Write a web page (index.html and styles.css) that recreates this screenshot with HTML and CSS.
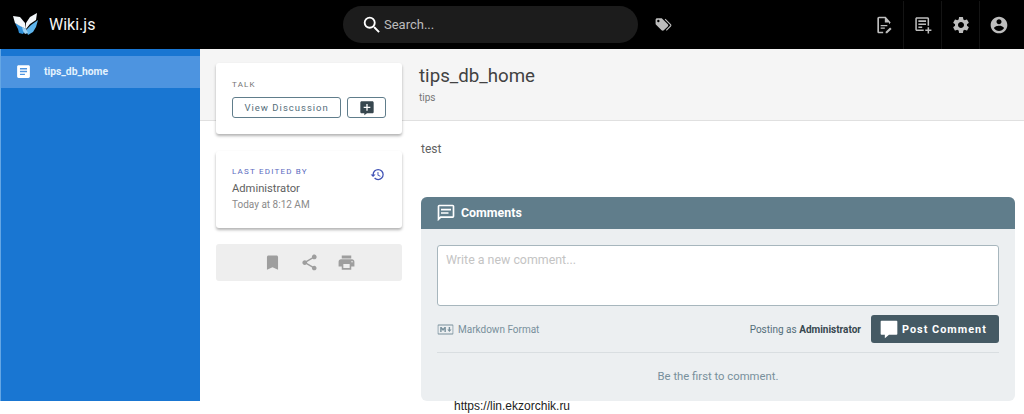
FILE: index.html
```html
<!DOCTYPE html>
<html lang="en">
<head>
    <meta charset="UTF-8">
    <title>tips_db_home | Wiki.js</title>
    <link rel="stylesheet" href="styles.css">
</head>
<body>
    <header class="topbar">
        <div class="brand">
            <svg class="logo" viewBox="0 0 26 24" width="26" height="24">
                <path fill="#2f8fd8" d="M2 10l6 3 5 3-3 5-4-1-1-4z"/>
                <path fill="#5db4ec" d="M25 7l-2 7-3 5-5 3-2-5 5-5z"/>
                <path fill="#f4f8fb" d="M0 3l7 1 5 6 1 6-6-3-5-3z"/>
                <path fill="#f4f8fb" d="M24 0l-1 7-6 4-4 5 0-6 4-6z"/>
                <path fill="#9fd2f4" d="M9 14l4 2 2 4-3 1-2-3z"/>
            </svg>
            <span class="brand-name">Wiki.js</span>
        </div>
        <div class="search-wrap">
            <div class="search">
                <svg class="icon search-icon" viewBox="0 0 24 24"><path d="M15.5 14h-.79l-.28-.27A6.47 6.47 0 0 0 16 9.5 6.5 6.5 0 1 0 9.5 16c1.61 0 3.09-.59 4.23-1.57l.27.28v.79l5 4.99L20.49 19l-4.99-5zm-6 0C7.01 14 5 11.99 5 9.5S7.01 5 9.5 5 14 7.01 14 9.5 11.99 14 9.5 14z"/></svg>
                <span>Search...</span>
            </div>
            <svg class="icon tag-icon" viewBox="0 0 24 24"><path d="M5.5,9A1.5,1.5 0 0,0 7,7.5A1.5,1.5 0 0,0 5.5,6A1.5,1.5 0 0,0 4,7.5A1.5,1.5 0 0,0 5.5,9M17.41,11.58C17.77,11.94 18,12.44 18,13C18,13.55 17.78,14.05 17.41,14.41L12.41,19.41C12.05,19.77 11.55,20 11,20C10.45,20 9.95,19.78 9.58,19.41L2.59,12.42C2.22,12.05 2,11.55 2,11V6C2,4.89 2.89,4 4,4H9C9.55,4 10.05,4.22 10.41,4.58L17.41,11.58M13.54,5.71L14.54,4.71L21.41,11.58C21.78,11.94 22,12.45 22,13C22,13.55 21.78,14.05 21.42,14.41L16.04,19.79L15.04,18.79L20.75,13L13.54,5.71Z"/></svg>
        </div>
        <nav class="actions">
            <div class="action">
                <svg class="icon" viewBox="0 0 24 24"><path d="M14 2H6c-1.1 0-2 .9-2 2v16c0 1.1.9 2 2 2h5v-2H6V4h7v5h5v2l2-2-6-7zM8 12h8v1.5H8zm0 3h5v1.5H8zm6 5.2V22h1.8l5.3-5.3-1.8-1.8z"/></svg>
            </div>
            <div class="action">
                <svg class="icon" viewBox="0 0 24 24"><path d="M19 3H5c-1.1 0-2 .9-2 2v14c0 1.1.9 2 2 2h9v-2H5V5h14v9h2V5c0-1.1-.9-2-2-2zM7 7h10v2H7zm0 4h10v2H7zm0 4h5v2H7zm12 1v3h-3v2h3v3h2v-3h3v-2h-3v-3z" transform="scale(.92)"/></svg>
            </div>
            <div class="action">
                <svg class="icon" viewBox="0 0 24 24"><path d="M19.14 12.94c.04-.3.06-.61.06-.94 0-.32-.02-.64-.07-.94l2.03-1.58a.49.49 0 0 0 .12-.61l-1.92-3.32a.488.488 0 0 0-.59-.22l-2.39.96c-.5-.38-1.03-.7-1.62-.94l-.36-2.54a.484.484 0 0 0-.48-.41h-3.84c-.24 0-.43.17-.47.41l-.36 2.54c-.59.24-1.13.57-1.62.94l-2.39-.96c-.22-.08-.47 0-.59.22L2.74 8.87c-.12.21-.08.47.12.61l2.03 1.58c-.05.3-.09.63-.09.94s.02.64.07.94l-2.03 1.58a.49.49 0 0 0-.12.61l1.92 3.32c.12.22.37.29.59.22l2.39-.96c.5.38 1.03.7 1.62.94l.36 2.54c.05.24.24.41.48.41h3.84c.24 0 .44-.17.47-.41l.36-2.54c.59-.24 1.13-.56 1.62-.94l2.39.96c.22.08.47 0 .59-.22l1.92-3.32c.12-.22.07-.47-.12-.61l-2.01-1.58zM12 15.6c-1.98 0-3.6-1.62-3.6-3.6s1.62-3.6 3.6-3.6 3.6 1.62 3.6 3.6-1.62 3.6-3.6 3.6z"/></svg>
            </div>
            <div class="action">
                <svg class="icon" viewBox="0 0 24 24"><path d="M12 2C6.48 2 2 6.48 2 12s4.48 10 10 10 10-4.48 10-10S17.52 2 12 2zm0 3c1.66 0 3 1.34 3 3s-1.34 3-3 3-3-1.34-3-3 1.34-3 3-3zm0 14.2c-2.5 0-4.71-1.28-6-3.22.03-1.99 4-3.08 6-3.08 1.99 0 5.97 1.09 6 3.08-1.29 1.94-3.5 3.22-6 3.22z"/></svg>
            </div>
        </nav>
    </header>

    <div class="layout">
        <aside class="sidebar">
            <div class="nav-item">
                <svg class="nav-icon" viewBox="0 0 24 24"><path d="M19 3H5c-1.1 0-2 .9-2 2v14c0 1.1.9 2 2 2h14c1.1 0 2-.9 2-2V5c0-1.1-.9-2-2-2zm-5 14H7v-2h7v2zm3-4H7v-2h10v2zm0-4H7V7h10v2z"/></svg>
                <span>tips_db_home</span>
            </div>
        </aside>

        <main class="main">
            <div class="side-col">
                <section class="card talk">
                    <div class="overline">TALK</div>
                    <div class="talk-btns">
                        <div class="btn btn-wide">View Discussion</div>
                        <div class="btn btn-narrow">
                            <svg viewBox="0 0 24 24" width="16" height="16"><path fill="#37474f" d="M20 2H4c-1.1 0-2 .9-2 2v14c0 1.1.9 2 2 2h4v3l4-3h8c1.1 0 2-.9 2-2V4c0-1.1-.9-2-2-2zm-3 10h-4v4h-2v-4H7v-2h4V6h2v4h4v2z"/></svg>
                        </div>
                    </div>
                </section>
                <section class="card edited">
                    <div class="edited-text">
                        <div class="overline overline-blue">LAST EDITED BY</div>
                        <div class="author">Administrator</div>
                        <div class="edit-date">Today at 8:12 AM</div>
                    </div>
                    <svg class="history" viewBox="0 0 24 24"><path d="M13 3a9 9 0 0 0-9 9H1l3.89 3.89.07.14L9 12H6c0-3.87 3.13-7 7-7s7 3.13 7 7-3.13 7-7 7c-1.93 0-3.68-.79-4.94-2.06l-1.42 1.42A8.954 8.954 0 0 0 13 21a9 9 0 0 0 0-18zm-1 5v5l4.28 2.54.72-1.21-3.5-2.08V8H12z"/></svg>
                </section>
                <section class="tools">
                    <svg viewBox="0 0 24 24"><path d="M17 3H7c-1.1 0-2 .9-2 2v16l7-3 7 3V5c0-1.1-.9-2-2-2z"/></svg>
                    <svg viewBox="0 0 24 24"><path d="M18 16.08c-.76 0-1.44.3-1.96.77L8.91 12.7c.05-.23.09-.46.09-.7s-.04-.47-.09-.7l7.05-4.11c.54.5 1.25.81 2.04.81 1.66 0 3-1.34 3-3s-1.34-3-3-3-3 1.34-3 3c0 .24.04.47.09.7L8.04 9.81C7.5 9.31 6.79 9 6 9c-1.66 0-3 1.34-3 3s1.34 3 3 3c.79 0 1.5-.31 2.04-.81l7.12 4.16c-.05.21-.08.43-.08.65 0 1.61 1.31 2.92 2.92 2.92s2.92-1.31 2.92-2.92-1.31-2.92-2.92-2.92z"/></svg>
                    <svg viewBox="0 0 24 24"><path d="M19 8H5c-1.66 0-3 1.34-3 3v6h4v4h12v-4h4v-6c0-1.66-1.34-3-3-3zm-3 11H8v-5h8v5zm3-7c-.55 0-1-.45-1-1s.45-1 1-1 1 .45 1 1-.45 1-1 1zm-1-9H6v4h12V3z"/></svg>
                </section>
            </div>

            <div class="content">
                <div class="page-head">
                    <h1>tips_db_home</h1>
                    <div class="page-sub">tips</div>
                </div>
                <div class="page-body">
                    <p class="page-text">test</p>
                    <section class="comments">
                        <div class="comments-head">
                            <svg viewBox="0 0 24 24" width="20" height="20"><path fill="#fff" d="M20,2H4A2,2 0 0,0 2,4V22L6,18H20A2,2 0 0,0 22,16V4A2,2 0 0,0 20,2M20,16H5.17L4,17.17V4H20V16M6,7H18V9H6V7M6,11H15V13H6V11Z"/></svg>
                            <span>Comments</span>
                        </div>
                        <div class="comments-body">
                            <div class="comment-input">Write a new comment...</div>
                            <div class="comment-row">
                                <div class="md-hint">
                                    <svg viewBox="0 0 24 24" width="17" height="17"><path fill="#78909c" d="M2 5h20c.55 0 1 .45 1 1v12c0 .55-.45 1-1 1H2c-.55 0-1-.45-1-1V6c0-.55.45-1 1-1zm0 1.5v11h20v-11zM4.500 15.500v-7h2l2 2.600 2-2.600h2v7h-2v-4l-2 2.500-2-2.500v4zm13 0l-3-3.400h2v-3.600h2v3.600h2z"/></svg>
                                    <span>Markdown Format</span>
                                </div>
                                <div class="post-side">
                                    <span class="posting">Posting as <b>Administrator</b></span>
                                    <div class="post-btn">
                                        <svg viewBox="0 0 24 24" width="20" height="20"><path fill="#fff" d="M21 2H3c-.55 0-1 .45-1 1v15c0 .55.45 1 1 1h4v4l5-4h9c.55 0 1-.45 1-1V3c0-.55-.45-1-1-1z"/></svg>
                                        <span>Post Comment</span>
                                    </div>
                                </div>
                            </div>
                            <div class="first-note">Be the first to comment.</div>
                        </div>
                    </section>
                </div>
            </div>
        </main>
    </div>

    <footer class="site-url">https://lin.ekzorchik.ru</footer>
</body>
</html>
```

FILE: styles.css
```css
* {
    box-sizing: border-box;
}
html, body {
    margin: 0;
    height: 414px;
    overflow: hidden;
}
body {
    font-family: Roboto, "Liberation Sans", sans-serif;
    background-color: #fff;
    color: #424242;
}
.icon {
    width: 24px;
    height: 24px;
    fill: currentColor;
    display: block;
}

/* top bar */
.topbar {
    height: 49px;
    background-color: #000;
    color: #fff;
    display: flex;
    align-items: center;
}
.brand {
    width: 343px;
    display: flex;
    align-items: center;
    padding-left: 13px;
}
.logo {
    margin-right: 10px;
}
.brand-name {
    font-size: 16px;
    font-weight: 400;
    color: #f5f5f5;
}
.search-wrap {
    flex: 1;
    display: flex;
    align-items: center;
    height: 48px;
}
.search {
    width: 295px;
    height: 37px;
    border-radius: 19px;
    background-color: #1c1c1c;
    color: #bdbdbd;
    font-size: 13px;
    display: flex;
    align-items: center;
    padding-left: 18px;
}
.search-icon {
    width: 22px;
    height: 22px;
    color: #fff;
    margin-right: 1px;
}
.tag-icon {
    width: 19px;
    height: 19px;
    margin-left: 16px;
    color: #bdbdbd;
}
.actions {
    display: flex;
    height: 48px;
    padding-right: 7px;
}
.action {
    width: 38px;
    border-left: 1px solid #141414;
    display: flex;
    align-items: center;
    justify-content: center;
    color: #bdbdbd;
}
.action:first-child {
    border-left: none;
}
.action .icon {
    width: 20px;
    height: 20px;
}

/* sidebar */
.layout {
    display: flex;
    height: 352px;
}
.sidebar {
    width: 200px;
    background-color: #1976d2;
    border-left: 1px solid #64a6e4;
    padding-top: 7px;
}
.nav-item {
    height: 32px;
    background-color: #4d94e0;
    display: flex;
    align-items: center;
    padding: 0 0 1px 14px;
    color: #e3f2fd;
    font-size: 10.300px;
    font-weight: 700;
}
.nav-icon {
    width: 17px;
    height: 17px;
    fill: #fff;
    margin-right: 12px;
}

/* main */
.main {
    flex: 1;
    display: flex;
    background: linear-gradient(#f5f5f5 71px, #e0e0e0 71px, #e0e0e0 72px, #fff 72px);
}
.side-col {
    width: 219px;
    padding: 14px 17px 0 16px;
}
.card {
    background-color: #fff;
    border-radius: 3px;
    box-shadow: 0 2px 3px rgba(0, 0, 0, .3);
}
.overline {
    font-size: 8px;
    letter-spacing: 1.200px;
    color: #757575;
}
.overline-blue {
    color: #5c6bc0;
}
.talk {
    height: 71px;
    padding: 17px 16px 0;
}
.talk-btns {
    display: flex;
    gap: 6px;
    margin-top: 8px;
}
.btn {
    height: 21px;
    border: 1px solid #607d8b;
    border-radius: 3px;
    display: flex;
    align-items: center;
    justify-content: center;
    font-size: 9.500px;
    font-weight: 400;
    letter-spacing: 1px;
    color: #546e7a;
}
.btn-wide {
    width: 110px;
}
.btn-narrow {
    width: 39px;
}
.edited {
    height: 77px;
    margin-top: 17px;
    padding: 16px 16px 0;
    display: flex;
    justify-content: space-between;
}
.author {
    font-size: 11.200px;
    margin-top: 6px;
    color: #616161;
}
.edit-date {
    font-size: 10px;
    margin-top: 4px;
    color: #8a8a8a;
}
.history {
    width: 15px;
    height: 15px;
    fill: #3f51b5;
    margin-right: 1px;
}
.tools {
    height: 37px;
    margin-top: 16px;
    border-radius: 3px;
    background-color: #eeeeee;
    display: flex;
    align-items: center;
    justify-content: center;
    gap: 18px;
}
.tools svg {
    width: 19px;
    height: 19px;
    fill: #9e9e9e;
}

/* page content */
.content {
    flex: 1;
}
.page-head {
    height: 72px;
    padding-top: 15px;
}
.page-head h1 {
    margin: 0;
    font-size: 18.700px;
    font-weight: 400;
    line-height: 25px;
    color: #424242;
}
.page-sub {
    font-size: 10px;
    color: #757575;
    margin-top: 3px;
}
.page-body {
    padding: 0 9px 0 2px;
}
.page-text {
    margin: 0;
    padding-top: 20px;
    font-size: 12px;
    line-height: 16px;
    color: #616161;
}
.comments {
    margin-top: 40px;
    height: 204px;
    border-radius: 6px;
    background-color: #eceff1;
    overflow: hidden;
}
.comments-head {
    height: 32px;
    background-color: #607d8b;
    color: #fff;
    display: flex;
    align-items: center;
    padding: 0 0 1px 15px;
    font-size: 12.400px;
    font-weight: 700;
}
.comments-head svg {
    margin-right: 5px;
}
.comments-body {
    padding: 16px 16px 0;
}
.comment-input {
    height: 61px;
    border: 1px solid #a7b6bd;
    border-radius: 3px;
    background-color: #fff;
    padding: 6px 8px;
    font-size: 12.400px;
    color: #c4c4c4;
}
.comment-row {
    height: 47px;
    padding-top: 9px;
    border-bottom: 1px solid #d9dee1;
    display: flex;
    justify-content: space-between;
}
.md-hint {
    display: flex;
    align-items: center;
    height: 28px;
    gap: 4px;
    font-size: 10px;
    color: #78909c;
}
.post-side {
    display: flex;
    align-items: center;
    height: 28px;
}
.posting {
    font-size: 10px;
    color: #546e7a;
    margin-right: 10px;
}
.posting b {
    color: #37474f;
}
.post-btn {
    width: 128px;
    height: 28px;
    border-radius: 3px;
    background-color: #455a64;
    color: #fff;
    display: flex;
    align-items: center;
    padding-left: 8px;
    gap: 3px;
    font-size: 10.900px;
    font-weight: 700;
    letter-spacing: 1px;
}
.first-note {
    padding-top: 17px;
    text-align: center;
    font-size: 11.300px;
    color: #78909c;
}

/* address line under the shot */
.site-url {
    height: 13px;
    padding-left: 454px;
    font-family: "Liberation Sans", Arial, sans-serif;
    font-size: 12px;
    line-height: 10px;
    color: #222;
    background-color: #fff;
}
```
